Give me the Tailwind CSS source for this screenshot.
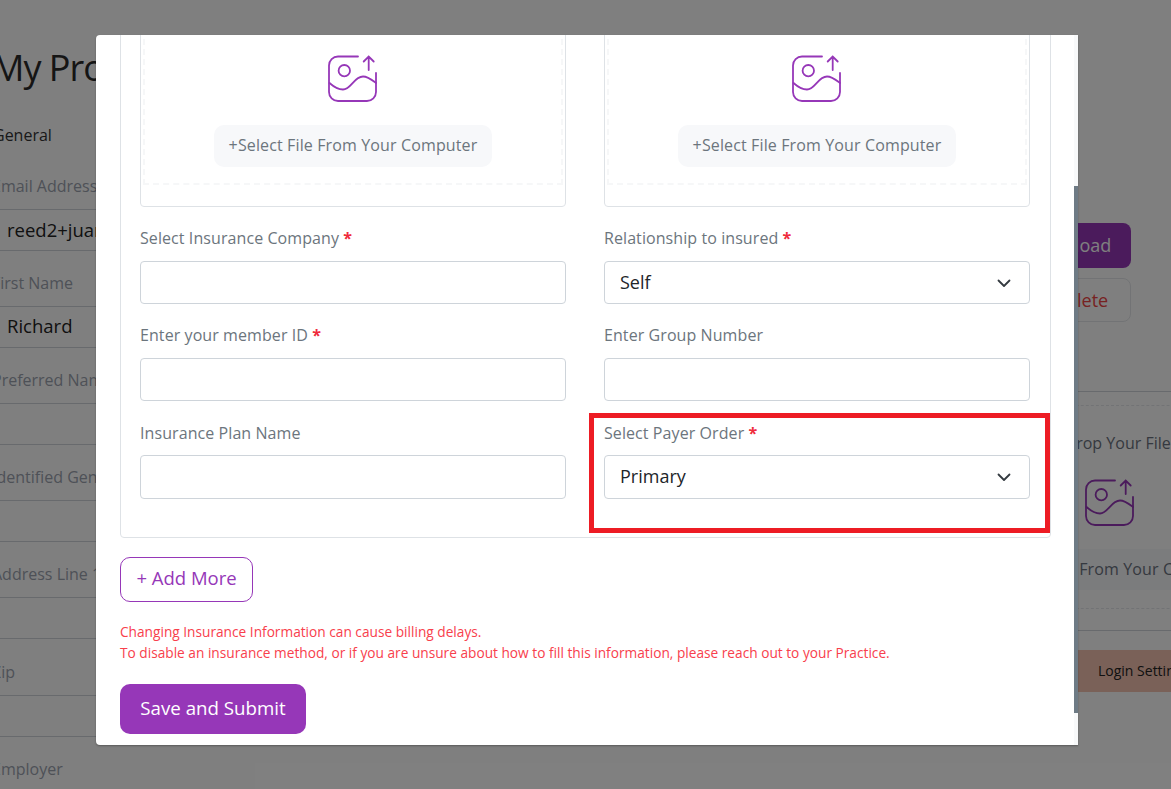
<!DOCTYPE html>
<html lang="en">
<head>
<meta charset="UTF-8">
<title>My Profile</title>
<script src="https://cdn.jsdelivr.net/npm/@tailwindcss/browser@4"></script>
</head>
<body class="font-['Open_Sans',sans-serif]">
<div class="relative h-[789px] w-full overflow-hidden bg-white">

  <!-- page behind the modal -->
  <div class="flex">
    <div class="w-[500px] shrink-0 -ml-[8px]">
      <h1 class="pt-[44px] h-[100px] text-[36px] leading-[48px] tracking-[-1px] text-[#2b2b2b]">My Profile</h1>
      <div class="mt-[23px] pl-[1px] h-[24px] text-[16px] leading-[24px] text-[#333]">General</div>
      <div class="mt-[27px]">
        <div class="h-[24px] leading-[24px] text-[#9ca3af]">Email Address</div>
        <div class="mt-[11px] h-[42px] border-y border-[#d1d5db] pl-[15px] text-[18.5px] leading-[40px] text-[#222]">reed2+juan@example.com</div>
      </div>
      <div class="mt-[20px]">
        <div class="h-[24px] leading-[24px] text-[#9ca3af]">First Name</div>
        <div class="mt-[11px] h-[42px] border-y border-[#d1d5db] pl-[15px] text-[18.5px] leading-[38px] text-[#222]">Richard</div>
      </div>
      <div class="mt-[20px]">
        <div class="h-[24px] leading-[24px] text-[#9ca3af]">Preferred Name</div>
        <div class="mt-[11px] h-[42px] border-y border-[#d1d5db]"></div>
      </div>
      <div class="mt-[20px]">
        <div class="h-[24px] leading-[24px] text-[#9ca3af]">Identified Gender</div>
        <div class="mt-[11px] h-[42px] border-y border-[#d1d5db]"></div>
      </div>
      <div class="mt-[20px]">
        <div class="h-[24px] leading-[24px] text-[#9ca3af]">Address Line 1</div>
        <div class="mt-[11px] h-[42px] border-y border-[#d1d5db]"></div>
      </div>
      <div class="mt-[21px]">
        <div class="h-[24px] leading-[24px] text-[#9ca3af]">Zip</div>
        <div class="mt-[11px] h-[42px] border-y border-[#d1d5db]"></div>
      </div>
      <div class="mt-[20px]">
        <div class="h-[24px] leading-[24px] text-[#9ca3af]">Employer</div>
      </div>
    </div>

    <div class="ml-[508px] w-[220px] shrink-0 pt-[223px] flex flex-col items-center">
      <div class="self-start ml-[31px] w-[100px] h-[45px] rounded-[8px] bg-[#9637b8] text-center text-[18px] leading-[45px] text-white">Upload</div>
      <div class="self-start ml-[31px] mt-[10px] w-[100px] h-[44px] rounded-[8px] border border-[#e5e7eb] text-center text-[18px] leading-[42px] text-[#ef4444]">Delete</div>
      <div class="mt-[69px] w-full border-t border-[#d1d5db]"></div>
      <div class="mt-[13px] w-full border-t border-dashed border-[#e5e7eb]"></div>
      <div class="mt-[25px] h-[24px] pr-[18px] leading-[24px] whitespace-nowrap text-[#6b7280]">Drag And Drop Your File Here</div>
      <svg class="mt-[24px]" width="50" height="48" viewBox="0 0 50 48" fill="none" stroke="#9637b8" stroke-width="1.8" stroke-linecap="round">
        <path d="M30 1.5H10A9 9 0 0 0 1 10.5V37A9 9 0 0 0 10 46H39A9 9 0 0 0 48 37V18"/>
        <path d="M1.5 28C6 32 10 34.5 15 34.5C23 34.5 26 21.5 35 21.5C40 21.5 44 25 48 28"/>
        <circle cx="16.3" cy="15.7" r="5.7"/>
        <path d="M40.7 15V2M35.7 6.5L40.7 1.5L45.7 6.5"/>
      </svg>
      <div class="mt-[22px] h-[41px] w-[279px] shrink-0 rounded-[10px] bg-[#f7f8fa] pl-[10px] text-center leading-[41px] tracking-[0.13px] whitespace-nowrap text-[#6b7280]">+Select File From Your Computer</div>
      <div class="mt-[18px] w-full border-t border-dashed border-[#e5e7eb]"></div>
      <div class="mt-[21px] w-full border-t border-[#d1d5db]"></div>
      <div class="mt-[19px] h-[42px] w-full bg-[#f4c2b0] pl-[98px] text-[14px] leading-[42px] whitespace-nowrap text-[#222]">Login Settings</div>
    </div>
  </div>

  <div class="absolute inset-0 bg-black/50"></div>

  <!-- modal -->
  <div class="absolute left-[96px] top-[35px] h-[710px] w-[982px] overflow-hidden rounded-l-[4px] bg-white shadow-[0_1px_2px_rgba(0,0,0,0.3)]">
    <div class="w-[955px] pl-[24px]">
      <div class="-mt-[30px] h-[533px] w-[931px] rounded-b-[4px] border border-[#dee2e6] pl-[19px] pr-[20px]">
        <div class="grid grid-cols-2 gap-x-[38px]">
          <div class="h-[201px] rounded-[4px] border border-[#dee2e6] p-[2px]">
            <div class="flex h-[176px] flex-col items-center border-2 border-dashed border-[#f6f7f8] pt-[44px]">
              <svg width="50" height="48" viewBox="0 0 50 48" fill="none" stroke="#9637b8" stroke-width="1.8" stroke-linecap="round">
                <path d="M30 1.5H10A9 9 0 0 0 1 10.5V37A9 9 0 0 0 10 46H39A9 9 0 0 0 48 37V18"/>
                <path d="M1.5 28C6 32 10 34.5 15 34.5C23 34.5 26 21.5 35 21.5C40 21.5 44 25 48 28"/>
                <circle cx="16.3" cy="15.7" r="5.7"/>
                <path d="M40.7 15V2M35.7 6.5L40.7 1.5L45.7 6.5"/>
              </svg>
              <div class="mt-[22px] h-[42px] w-[278px] rounded-[10px] bg-[#f7f8fa] text-center text-[16px] leading-[41px] tracking-[0.13px] whitespace-nowrap text-[#6c757d]">+Select File From Your Computer</div>
            </div>
          </div>
          <div class="h-[201px] rounded-[4px] border border-[#dee2e6] p-[2px]">
            <div class="flex h-[176px] flex-col items-center border-2 border-dashed border-[#f6f7f8] pt-[44px]">
              <svg width="50" height="48" viewBox="0 0 50 48" fill="none" stroke="#9637b8" stroke-width="1.8" stroke-linecap="round">
                <path d="M30 1.5H10A9 9 0 0 0 1 10.5V37A9 9 0 0 0 10 46H39A9 9 0 0 0 48 37V18"/>
                <path d="M1.5 28C6 32 10 34.5 15 34.5C23 34.5 26 21.5 35 21.5C40 21.5 44 25 48 28"/>
                <circle cx="16.3" cy="15.7" r="5.7"/>
                <path d="M40.7 15V2M35.7 6.5L40.7 1.5L45.7 6.5"/>
              </svg>
              <div class="mt-[22px] h-[42px] w-[278px] rounded-[10px] bg-[#f7f8fa] text-center text-[16px] leading-[41px] tracking-[0.13px] whitespace-nowrap text-[#6c757d]">+Select File From Your Computer</div>
            </div>
          </div>
        </div>

        <div class="mt-[19px] grid grid-cols-2 gap-x-[38px]">
          <div>
            <div class="h-[24px] text-[16px] leading-[24px] tracking-[0.08px] text-[#6c757d]">Select Insurance Company <span class="font-bold text-[#ef2b3c]">*</span></div>
            <div class="mt-[11px] h-[43px] rounded-[4px] border border-[#ced4da]"></div>
          </div>
          <div>
            <div class="h-[24px] text-[16px] leading-[24px] tracking-[0.08px] text-[#6c757d]">Relationship to insured <span class="font-bold text-[#ef2b3c]">*</span></div>
            <div class="mt-[11px] flex h-[43px] items-center justify-between rounded-[4px] border border-[#ced4da] pl-[15px] pr-[17px] text-[18px] text-[#212529]">Self
              <svg width="16" height="16" viewBox="0 0 16 16" fill="none" stroke="#343a40" stroke-width="1.8" stroke-linecap="round" stroke-linejoin="round"><path d="M2.5 5.5L8 11L13.5 5.5"/></svg>
            </div>
          </div>
        </div>

        <div class="mt-[19px] grid grid-cols-2 gap-x-[38px]">
          <div>
            <div class="h-[24px] text-[16px] leading-[24px] tracking-[0.08px] text-[#6c757d]">Enter your member ID <span class="font-bold text-[#ef2b3c]">*</span></div>
            <div class="mt-[11px] h-[43px] rounded-[4px] border border-[#ced4da]"></div>
          </div>
          <div>
            <div class="h-[24px] text-[16px] leading-[24px] tracking-[0.08px] text-[#6c757d]">Enter Group Number</div>
            <div class="mt-[11px] h-[43px] rounded-[4px] border border-[#ced4da]"></div>
          </div>
        </div>

        <div class="mt-[20px] grid grid-cols-2 gap-x-[38px]">
          <div>
            <div class="h-[24px] text-[16px] leading-[24px] tracking-[0.08px] text-[#6c757d]">Insurance Plan Name</div>
            <div class="mt-[10px] h-[44px] rounded-[4px] border border-[#ced4da]"></div>
          </div>
          <div>
            <div class="h-[24px] text-[16px] leading-[24px] tracking-[0.08px] text-[#6c757d]">Select Payer Order <span class="font-bold text-[#ef2b3c]">*</span></div>
            <div class="mt-[10px] flex h-[44px] items-center justify-between rounded-[4px] border border-[#ced4da] pb-[2px] pl-[15px] pr-[17px] text-[18px] text-[#212529]">Primary
              <svg class="mt-[2px]" width="16" height="16" viewBox="0 0 16 16" fill="none" stroke="#343a40" stroke-width="1.8" stroke-linecap="round" stroke-linejoin="round"><path d="M2.5 5.5L8 11L13.5 5.5"/></svg>
            </div>
          </div>
        </div>
      </div>

      <button class="mt-[19px] block h-[45px] w-[133px] rounded-[10px] border border-[#9637b8] pb-[3px] text-[18.5px] text-[#9637b8]">+ Add More</button>
      <p class="mt-[19px] text-[13.7px] leading-[21px] text-[#f8404c]">Changing Insurance Information can cause billing delays.<br>To disable an insurance method, or if you are unsure about how to fill this information, please reach out to your Practice.</p>
      <button class="mt-[21px] block h-[50px] w-[186px] rounded-[10px] bg-[#9637b8] pb-[2px] text-[18.7px] text-white">Save and Submit</button>
    </div>
    <!-- scrollbar -->
    <div class="absolute right-0 top-0 h-full w-[4px] bg-[#f8f9fa]">
      <div class="mt-[151px] h-[527px] w-full bg-[#6e7b85]"></div>
    </div>
  </div>

  <!-- highlight drawn on the screenshot -->
  <div class="absolute left-[589px] top-[413px] h-[120px] w-[461px] border-[5px] border-[#ed1c24]"></div>
</div>
</body>
</html>
